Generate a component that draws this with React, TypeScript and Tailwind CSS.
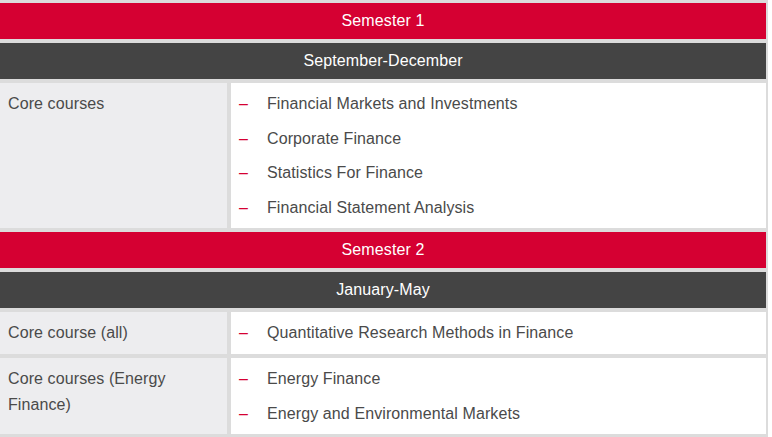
const semesters = [
  {
    title: 'Semester 1',
    period: 'September-December',
    rows: [
      {
        label: 'Core courses',
        courses: [
          'Financial Markets and Investments',
          'Corporate Finance',
          'Statistics For Finance',
          'Financial Statement Analysis',
        ],
      },
    ],
  },
  {
    title: 'Semester 2',
    period: 'January-May',
    rows: [
      {
        label: 'Core course (all)',
        courses: ['Quantitative Research Methods in Finance'],
      },
      {
        label: 'Core courses (Energy Finance)',
        courses: ['Energy Finance', 'Energy and Environmental Markets'],
      },
    ],
  },
]

const App = () => {
  return (
    <div className="min-h-[437px] w-[772px] bg-white font-['Liberation_Sans',Arial,sans-serif] text-[16px] tracking-[0.1px]">
      <div className="flex w-[768px] flex-col gap-[4px] bg-[#dcdcdc] pb-[4px] pr-[2px] pt-[3px]">
        {semesters.map((sem) => (
          <div key={sem.title} className="flex flex-col gap-[4px]">
            {/* semestre */}
            <div className="flex h-[36px] items-center justify-center bg-[#d50032] text-white">
              {sem.title}
            </div>
            <div className="flex h-[36px] items-center justify-center bg-[#444444] text-white">
              {sem.period}
            </div>

            {sem.rows.map((row) => (
              <div key={row.label} className="flex gap-[4px] leading-[1.6] text-[#4a4a4a]">
                <div className="w-[227px] shrink-0 bg-[#ededef] px-2 py-2">
                  {row.label}
                </div>
                <ul className="flex flex-1 flex-col gap-[9px] bg-white py-2 pl-2">
                  {row.courses.map((c) => (
                    <li key={c} className="flex">
                      <span className="w-[28px] shrink-0 text-[#d50032]">–</span>
                      <span>{c}</span>
                    </li>
                  ))}
                </ul>
              </div>
            ))}
          </div>
        ))}
      </div>
    </div>
  )
}

export default App
